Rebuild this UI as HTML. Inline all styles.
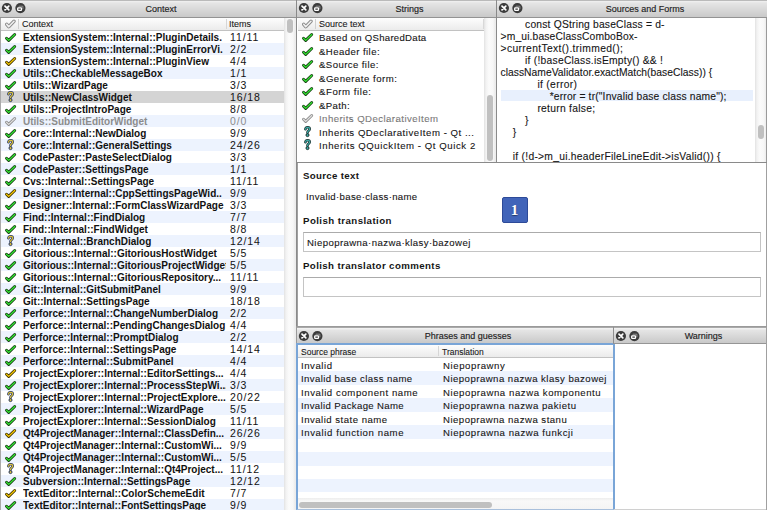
<!DOCTYPE html><html><head><meta charset="utf-8"><style>
*{margin:0;padding:0;box-sizing:border-box}
html,body{width:767px;height:510px;overflow:hidden;background:#ffffff;position:relative;font-family:"Liberation Sans",sans-serif;color:#000}
.a{position:absolute}
.tb{position:absolute;background:linear-gradient(#bababa 0,#bababa 1px,#f1f1f1 1px,#e5e5e5 3px,#c9c9c9 17px,#939393 17px,#939393 18px)}
.tb2{position:absolute;background:linear-gradient(#a9a9a9 0,#a9a9a9 1px,#f1f1f1 1px,#f1f1f1 2px,#e5e5e5 3px,#c9c9c9 16px)}
.tb2 svg{margin-top:0.5px}
.ttl{position:absolute;top:1px;height:17px;line-height:17px;text-align:center;font-size:9px;color:#222;-webkit-text-stroke:0.15px #222}
.tb2 .ttl{top:0.5px}
.ic{position:absolute}
.hdr{position:absolute;background:linear-gradient(#fdfdfd,#ebebeb);border-bottom:1px solid #c2c2c2;font-size:9px;color:#1a1a1a;-webkit-text-stroke:0.1px #1a1a1a}
.row{position:absolute;left:0;right:0;white-space:nowrap;overflow:hidden}
.alt{background:#edf3fe}
.sel{background:#d4d4d4}
.vtrack{position:absolute;background:linear-gradient(90deg,#e2e2e2 0,#f2f2f2 2px,#fbfbfb 5px,#f7f7f7 9px,#ececec 11px)}
.thumb{position:absolute;background:#c0c0c0;border-radius:3px}
.ctx{font-size:10px;font-weight:bold;color:#111}
.items{font-size:10.5px;letter-spacing:0.9px;color:#111}
.code{position:absolute;font-size:10.75px;white-space:pre;color:#151515;-webkit-text-stroke:0.1px #151515}
.lbl{position:absolute;font-size:10.5px;font-weight:bold;color:#151515}
.inp{position:absolute;border:1px solid #c4c4c4;border-top-color:#ababab;background:#fff}
.txt{color:#151515;-webkit-text-stroke:0.1px #151515}
</style></head><body>
<div class="a" style="left:0;top:0;width:1px;height:510px;background:#a9a9a9"></div>
<div class="tb" style="left:0px;top:0px;width:296px;height:18px"><svg class="ic" style="left:1px;top:2px" width="12" height="12" viewBox="0 0 12 12"><circle cx="5.9" cy="6" r="5.1" fill="#3b3b3b"/><path d="M4.0 4.1 L7.8 7.9 M7.8 4.1 L4.0 7.9" stroke="#fff" stroke-width="1.7" stroke-linecap="round"/></svg><svg class="ic" style="left:14px;top:2px" width="13" height="12" viewBox="0 0 13 12"><circle cx="6.4" cy="6.05" r="5.1" fill="#3b3b3b"/><path d="M4.9 4.6 V4.2 H8.9 V7.2" fill="none" stroke="#8f8f8f" stroke-width="1"/><rect x="3.7" y="5.8" width="3.8" height="2.6" rx="0.6" fill="none" stroke="#fff" stroke-width="1.3"/></svg><div class="ttl" style="left:26px;right:0">Context</div></div>
<div class="hdr" style="left:1px;top:18px;width:283px;height:13px"><svg class="ic" style="left:3.5px;top:-1.2px" width="14" height="12" viewBox="0 0 14 12"><path d="M1.7 7.3 L3.7 9.7 L9.0 4.3" fill="none" stroke="#8c8c8c" stroke-width="3.4" stroke-linecap="round" stroke-linejoin="round"/><path d="M1.7 7.3 L3.7 9.7 L9.0 4.3" fill="none" stroke="#f0f0f0" stroke-width="1.6" stroke-linecap="round" stroke-linejoin="round"/></svg><div class="a" style="left:17px;top:1px;width:1px;height:10px;background:#d0d0d0"></div><div class="a" style="left:21px;top:0.3px;line-height:12px">Context</div><div class="a" style="left:225px;top:1px;width:1px;height:10px;background:#d6d6d6"></div><div class="a" style="left:228px;top:0.3px;line-height:12px">Items</div></div>
<div class="a" style="left:1px;top:31px;width:283px;height:479px;overflow:hidden">
<div class="row" style="top:0px;height:12px"><svg class="ic" style="left:3px;top:0px" width="14" height="12" viewBox="0 0 14 12"><path d="M2.5 7.2 L4.7 9.4 L10.7 3.5" fill="none" stroke="#173d12" stroke-width="2.9" stroke-linecap="round" stroke-linejoin="round"/><path d="M2.5 7.2 L4.7 9.4 L10.7 3.5" fill="none" stroke="#33e533" stroke-width="1.3" stroke-linecap="round" stroke-linejoin="round"/></svg><div class="a ctx" style="left:22px;top:1px;width:203px;overflow:hidden;line-height:12px;">ExtensionSystem::Internal::PluginDetails.</div><div class="a items" style="left:229px;top:0;line-height:12px;">11/11</div></div>
<div class="row alt" style="top:12px;height:12px"><svg class="ic" style="left:3px;top:0px" width="14" height="12" viewBox="0 0 14 12"><path d="M2.5 7.2 L4.7 9.4 L10.7 3.5" fill="none" stroke="#173d12" stroke-width="2.9" stroke-linecap="round" stroke-linejoin="round"/><path d="M2.5 7.2 L4.7 9.4 L10.7 3.5" fill="none" stroke="#33e533" stroke-width="1.3" stroke-linecap="round" stroke-linejoin="round"/></svg><div class="a ctx" style="left:22px;top:1px;width:203px;overflow:hidden;line-height:12px;">ExtensionSystem::Internal::PluginErrorVi.</div><div class="a items" style="left:229px;top:0;line-height:12px;">2/2</div></div>
<div class="row" style="top:24px;height:12px"><svg class="ic" style="left:3px;top:0px" width="14" height="12" viewBox="0 0 14 12"><path d="M2.5 7.2 L4.7 9.4 L10.7 3.5" fill="none" stroke="#3d3000" stroke-width="2.9" stroke-linecap="round" stroke-linejoin="round"/><path d="M2.5 7.2 L4.7 9.4 L10.7 3.5" fill="none" stroke="#f5c800" stroke-width="1.3" stroke-linecap="round" stroke-linejoin="round"/></svg><div class="a ctx" style="left:22px;top:1px;width:203px;overflow:hidden;line-height:12px;">ExtensionSystem::Internal::PluginView</div><div class="a items" style="left:229px;top:0;line-height:12px;">4/4</div></div>
<div class="row alt" style="top:36px;height:12px"><svg class="ic" style="left:3px;top:0px" width="14" height="12" viewBox="0 0 14 12"><path d="M2.5 7.2 L4.7 9.4 L10.7 3.5" fill="none" stroke="#173d12" stroke-width="2.9" stroke-linecap="round" stroke-linejoin="round"/><path d="M2.5 7.2 L4.7 9.4 L10.7 3.5" fill="none" stroke="#33e533" stroke-width="1.3" stroke-linecap="round" stroke-linejoin="round"/></svg><div class="a ctx" style="left:22px;top:1px;width:203px;overflow:hidden;line-height:12px;">Utils::CheckableMessageBox</div><div class="a items" style="left:229px;top:0;line-height:12px;">1/1</div></div>
<div class="row" style="top:48px;height:12px"><svg class="ic" style="left:3px;top:0px" width="14" height="12" viewBox="0 0 14 12"><path d="M2.5 7.2 L4.7 9.4 L10.7 3.5" fill="none" stroke="#173d12" stroke-width="2.9" stroke-linecap="round" stroke-linejoin="round"/><path d="M2.5 7.2 L4.7 9.4 L10.7 3.5" fill="none" stroke="#33e533" stroke-width="1.3" stroke-linecap="round" stroke-linejoin="round"/></svg><div class="a ctx" style="left:22px;top:1px;width:203px;overflow:hidden;line-height:12px;">Utils::WizardPage</div><div class="a items" style="left:229px;top:0;line-height:12px;">3/3</div></div>
<div class="row sel" style="top:60px;height:12px"><svg class="ic" style="left:3px;top:0px" width="14" height="12" viewBox="0 0 14 12"><path d="M4.4 3.2 C4.6 1.9 5.5 1.3 6.6 1.3 C7.9 1.3 8.7 2.1 8.7 3.1 C8.7 4.3 7.6 4.8 6.9 5.4 C6.6 5.7 6.5 6.2 6.5 6.8" fill="none" stroke="#283860" stroke-width="2.6" stroke-linecap="round" stroke-linejoin="round"/><path d="M4.4 3.2 C4.6 1.9 5.5 1.3 6.6 1.3 C7.9 1.3 8.7 2.1 8.7 3.1 C8.7 4.3 7.6 4.8 6.9 5.4 C6.6 5.7 6.5 6.2 6.5 6.8" fill="none" stroke="#dcc23c" stroke-width="1.2" stroke-linecap="round" stroke-linejoin="round"/><circle cx="6.5" cy="9.1" r="1.5" fill="#dcc23c" stroke="#283860" stroke-width="1"/></svg><div class="a ctx" style="left:22px;top:1px;width:203px;overflow:hidden;line-height:12px;">Utils::NewClassWidget</div><div class="a items" style="left:229px;top:0;line-height:12px;">16/18</div></div>
<div class="row" style="top:72px;height:12px"><svg class="ic" style="left:3px;top:0px" width="14" height="12" viewBox="0 0 14 12"><path d="M2.5 7.2 L4.7 9.4 L10.7 3.5" fill="none" stroke="#173d12" stroke-width="2.9" stroke-linecap="round" stroke-linejoin="round"/><path d="M2.5 7.2 L4.7 9.4 L10.7 3.5" fill="none" stroke="#33e533" stroke-width="1.3" stroke-linecap="round" stroke-linejoin="round"/></svg><div class="a ctx" style="left:22px;top:1px;width:203px;overflow:hidden;line-height:12px;">Utils::ProjectIntroPage</div><div class="a items" style="left:229px;top:0;line-height:12px;">8/8</div></div>
<div class="row alt" style="top:84px;height:12px"><svg class="ic" style="left:3px;top:0px" width="14" height="12" viewBox="0 0 14 12"><path d="M2.5 7.2 L4.7 9.4 L10.7 3.5" fill="none" stroke="#8a8a8a" stroke-width="2.9" stroke-linecap="round" stroke-linejoin="round"/><path d="M2.5 7.2 L4.7 9.4 L10.7 3.5" fill="none" stroke="#dedede" stroke-width="1.3" stroke-linecap="round" stroke-linejoin="round"/></svg><div class="a ctx" style="left:22px;top:1px;width:203px;overflow:hidden;line-height:12px;color:#8c8c8c">Utils::SubmitEditorWidget</div><div class="a items" style="left:229px;top:0;line-height:12px;color:#8c8c8c">0/0</div></div>
<div class="row" style="top:96px;height:12px"><svg class="ic" style="left:3px;top:0px" width="14" height="12" viewBox="0 0 14 12"><path d="M2.5 7.2 L4.7 9.4 L10.7 3.5" fill="none" stroke="#173d12" stroke-width="2.9" stroke-linecap="round" stroke-linejoin="round"/><path d="M2.5 7.2 L4.7 9.4 L10.7 3.5" fill="none" stroke="#33e533" stroke-width="1.3" stroke-linecap="round" stroke-linejoin="round"/></svg><div class="a ctx" style="left:22px;top:1px;width:203px;overflow:hidden;line-height:12px;">Core::Internal::NewDialog</div><div class="a items" style="left:229px;top:0;line-height:12px;">9/9</div></div>
<div class="row alt" style="top:108px;height:12px"><svg class="ic" style="left:3px;top:0px" width="14" height="12" viewBox="0 0 14 12"><path d="M4.4 3.2 C4.6 1.9 5.5 1.3 6.6 1.3 C7.9 1.3 8.7 2.1 8.7 3.1 C8.7 4.3 7.6 4.8 6.9 5.4 C6.6 5.7 6.5 6.2 6.5 6.8" fill="none" stroke="#283860" stroke-width="2.6" stroke-linecap="round" stroke-linejoin="round"/><path d="M4.4 3.2 C4.6 1.9 5.5 1.3 6.6 1.3 C7.9 1.3 8.7 2.1 8.7 3.1 C8.7 4.3 7.6 4.8 6.9 5.4 C6.6 5.7 6.5 6.2 6.5 6.8" fill="none" stroke="#dcc23c" stroke-width="1.2" stroke-linecap="round" stroke-linejoin="round"/><circle cx="6.5" cy="9.1" r="1.5" fill="#dcc23c" stroke="#283860" stroke-width="1"/></svg><div class="a ctx" style="left:22px;top:1px;width:203px;overflow:hidden;line-height:12px;">Core::Internal::GeneralSettings</div><div class="a items" style="left:229px;top:0;line-height:12px;">24/26</div></div>
<div class="row" style="top:120px;height:12px"><svg class="ic" style="left:3px;top:0px" width="14" height="12" viewBox="0 0 14 12"><path d="M2.5 7.2 L4.7 9.4 L10.7 3.5" fill="none" stroke="#173d12" stroke-width="2.9" stroke-linecap="round" stroke-linejoin="round"/><path d="M2.5 7.2 L4.7 9.4 L10.7 3.5" fill="none" stroke="#33e533" stroke-width="1.3" stroke-linecap="round" stroke-linejoin="round"/></svg><div class="a ctx" style="left:22px;top:1px;width:203px;overflow:hidden;line-height:12px;">CodePaster::PasteSelectDialog</div><div class="a items" style="left:229px;top:0;line-height:12px;">3/3</div></div>
<div class="row alt" style="top:132px;height:12px"><svg class="ic" style="left:3px;top:0px" width="14" height="12" viewBox="0 0 14 12"><path d="M2.5 7.2 L4.7 9.4 L10.7 3.5" fill="none" stroke="#173d12" stroke-width="2.9" stroke-linecap="round" stroke-linejoin="round"/><path d="M2.5 7.2 L4.7 9.4 L10.7 3.5" fill="none" stroke="#33e533" stroke-width="1.3" stroke-linecap="round" stroke-linejoin="round"/></svg><div class="a ctx" style="left:22px;top:1px;width:203px;overflow:hidden;line-height:12px;">CodePaster::SettingsPage</div><div class="a items" style="left:229px;top:0;line-height:12px;">1/1</div></div>
<div class="row" style="top:144px;height:12px"><svg class="ic" style="left:3px;top:0px" width="14" height="12" viewBox="0 0 14 12"><path d="M2.5 7.2 L4.7 9.4 L10.7 3.5" fill="none" stroke="#173d12" stroke-width="2.9" stroke-linecap="round" stroke-linejoin="round"/><path d="M2.5 7.2 L4.7 9.4 L10.7 3.5" fill="none" stroke="#33e533" stroke-width="1.3" stroke-linecap="round" stroke-linejoin="round"/></svg><div class="a ctx" style="left:22px;top:1px;width:203px;overflow:hidden;line-height:12px;">Cvs::Internal::SettingsPage</div><div class="a items" style="left:229px;top:0;line-height:12px;">11/11</div></div>
<div class="row alt" style="top:156px;height:12px"><svg class="ic" style="left:3px;top:0px" width="14" height="12" viewBox="0 0 14 12"><path d="M2.5 7.2 L4.7 9.4 L10.7 3.5" fill="none" stroke="#3d3000" stroke-width="2.9" stroke-linecap="round" stroke-linejoin="round"/><path d="M2.5 7.2 L4.7 9.4 L10.7 3.5" fill="none" stroke="#f5c800" stroke-width="1.3" stroke-linecap="round" stroke-linejoin="round"/></svg><div class="a ctx" style="left:22px;top:1px;width:203px;overflow:hidden;line-height:12px;">Designer::Internal::CppSettingsPageWid..</div><div class="a items" style="left:229px;top:0;line-height:12px;">9/9</div></div>
<div class="row" style="top:168px;height:12px"><svg class="ic" style="left:3px;top:0px" width="14" height="12" viewBox="0 0 14 12"><path d="M2.5 7.2 L4.7 9.4 L10.7 3.5" fill="none" stroke="#173d12" stroke-width="2.9" stroke-linecap="round" stroke-linejoin="round"/><path d="M2.5 7.2 L4.7 9.4 L10.7 3.5" fill="none" stroke="#33e533" stroke-width="1.3" stroke-linecap="round" stroke-linejoin="round"/></svg><div class="a ctx" style="left:22px;top:1px;width:203px;overflow:hidden;line-height:12px;">Designer::Internal::FormClassWizardPage</div><div class="a items" style="left:229px;top:0;line-height:12px;">3/3</div></div>
<div class="row alt" style="top:180px;height:12px"><svg class="ic" style="left:3px;top:0px" width="14" height="12" viewBox="0 0 14 12"><path d="M2.5 7.2 L4.7 9.4 L10.7 3.5" fill="none" stroke="#173d12" stroke-width="2.9" stroke-linecap="round" stroke-linejoin="round"/><path d="M2.5 7.2 L4.7 9.4 L10.7 3.5" fill="none" stroke="#33e533" stroke-width="1.3" stroke-linecap="round" stroke-linejoin="round"/></svg><div class="a ctx" style="left:22px;top:1px;width:203px;overflow:hidden;line-height:12px;">Find::Internal::FindDialog</div><div class="a items" style="left:229px;top:0;line-height:12px;">7/7</div></div>
<div class="row" style="top:192px;height:12px"><svg class="ic" style="left:3px;top:0px" width="14" height="12" viewBox="0 0 14 12"><path d="M2.5 7.2 L4.7 9.4 L10.7 3.5" fill="none" stroke="#173d12" stroke-width="2.9" stroke-linecap="round" stroke-linejoin="round"/><path d="M2.5 7.2 L4.7 9.4 L10.7 3.5" fill="none" stroke="#33e533" stroke-width="1.3" stroke-linecap="round" stroke-linejoin="round"/></svg><div class="a ctx" style="left:22px;top:1px;width:203px;overflow:hidden;line-height:12px;">Find::Internal::FindWidget</div><div class="a items" style="left:229px;top:0;line-height:12px;">8/8</div></div>
<div class="row alt" style="top:204px;height:12px"><svg class="ic" style="left:3px;top:0px" width="14" height="12" viewBox="0 0 14 12"><path d="M4.4 3.2 C4.6 1.9 5.5 1.3 6.6 1.3 C7.9 1.3 8.7 2.1 8.7 3.1 C8.7 4.3 7.6 4.8 6.9 5.4 C6.6 5.7 6.5 6.2 6.5 6.8" fill="none" stroke="#283860" stroke-width="2.6" stroke-linecap="round" stroke-linejoin="round"/><path d="M4.4 3.2 C4.6 1.9 5.5 1.3 6.6 1.3 C7.9 1.3 8.7 2.1 8.7 3.1 C8.7 4.3 7.6 4.8 6.9 5.4 C6.6 5.7 6.5 6.2 6.5 6.8" fill="none" stroke="#dcc23c" stroke-width="1.2" stroke-linecap="round" stroke-linejoin="round"/><circle cx="6.5" cy="9.1" r="1.5" fill="#dcc23c" stroke="#283860" stroke-width="1"/></svg><div class="a ctx" style="left:22px;top:1px;width:203px;overflow:hidden;line-height:12px;">Git::Internal::BranchDialog</div><div class="a items" style="left:229px;top:0;line-height:12px;">12/14</div></div>
<div class="row" style="top:216px;height:12px"><svg class="ic" style="left:3px;top:0px" width="14" height="12" viewBox="0 0 14 12"><path d="M2.5 7.2 L4.7 9.4 L10.7 3.5" fill="none" stroke="#173d12" stroke-width="2.9" stroke-linecap="round" stroke-linejoin="round"/><path d="M2.5 7.2 L4.7 9.4 L10.7 3.5" fill="none" stroke="#33e533" stroke-width="1.3" stroke-linecap="round" stroke-linejoin="round"/></svg><div class="a ctx" style="left:22px;top:1px;width:203px;overflow:hidden;line-height:12px;">Gitorious::Internal::GitoriousHostWidget</div><div class="a items" style="left:229px;top:0;line-height:12px;">5/5</div></div>
<div class="row alt" style="top:228px;height:12px"><svg class="ic" style="left:3px;top:0px" width="14" height="12" viewBox="0 0 14 12"><path d="M2.5 7.2 L4.7 9.4 L10.7 3.5" fill="none" stroke="#173d12" stroke-width="2.9" stroke-linecap="round" stroke-linejoin="round"/><path d="M2.5 7.2 L4.7 9.4 L10.7 3.5" fill="none" stroke="#33e533" stroke-width="1.3" stroke-linecap="round" stroke-linejoin="round"/></svg><div class="a ctx" style="left:22px;top:1px;width:203px;overflow:hidden;line-height:12px;">Gitorious::Internal::GitoriousProjectWidget</div><div class="a items" style="left:229px;top:0;line-height:12px;">5/5</div></div>
<div class="row" style="top:240px;height:12px"><svg class="ic" style="left:3px;top:0px" width="14" height="12" viewBox="0 0 14 12"><path d="M2.5 7.2 L4.7 9.4 L10.7 3.5" fill="none" stroke="#173d12" stroke-width="2.9" stroke-linecap="round" stroke-linejoin="round"/><path d="M2.5 7.2 L4.7 9.4 L10.7 3.5" fill="none" stroke="#33e533" stroke-width="1.3" stroke-linecap="round" stroke-linejoin="round"/></svg><div class="a ctx" style="left:22px;top:1px;width:203px;overflow:hidden;line-height:12px;">Gitorious::Internal::GitoriousRepository...</div><div class="a items" style="left:229px;top:0;line-height:12px;">11/11</div></div>
<div class="row alt" style="top:252px;height:12px"><svg class="ic" style="left:3px;top:0px" width="14" height="12" viewBox="0 0 14 12"><path d="M2.5 7.2 L4.7 9.4 L10.7 3.5" fill="none" stroke="#173d12" stroke-width="2.9" stroke-linecap="round" stroke-linejoin="round"/><path d="M2.5 7.2 L4.7 9.4 L10.7 3.5" fill="none" stroke="#33e533" stroke-width="1.3" stroke-linecap="round" stroke-linejoin="round"/></svg><div class="a ctx" style="left:22px;top:1px;width:203px;overflow:hidden;line-height:12px;">Git::Internal::GitSubmitPanel</div><div class="a items" style="left:229px;top:0;line-height:12px;">9/9</div></div>
<div class="row" style="top:264px;height:12px"><svg class="ic" style="left:3px;top:0px" width="14" height="12" viewBox="0 0 14 12"><path d="M2.5 7.2 L4.7 9.4 L10.7 3.5" fill="none" stroke="#173d12" stroke-width="2.9" stroke-linecap="round" stroke-linejoin="round"/><path d="M2.5 7.2 L4.7 9.4 L10.7 3.5" fill="none" stroke="#33e533" stroke-width="1.3" stroke-linecap="round" stroke-linejoin="round"/></svg><div class="a ctx" style="left:22px;top:1px;width:203px;overflow:hidden;line-height:12px;">Git::Internal::SettingsPage</div><div class="a items" style="left:229px;top:0;line-height:12px;">18/18</div></div>
<div class="row alt" style="top:276px;height:12px"><svg class="ic" style="left:3px;top:0px" width="14" height="12" viewBox="0 0 14 12"><path d="M2.5 7.2 L4.7 9.4 L10.7 3.5" fill="none" stroke="#173d12" stroke-width="2.9" stroke-linecap="round" stroke-linejoin="round"/><path d="M2.5 7.2 L4.7 9.4 L10.7 3.5" fill="none" stroke="#33e533" stroke-width="1.3" stroke-linecap="round" stroke-linejoin="round"/></svg><div class="a ctx" style="left:22px;top:1px;width:203px;overflow:hidden;line-height:12px;">Perforce::Internal::ChangeNumberDialog</div><div class="a items" style="left:229px;top:0;line-height:12px;">2/2</div></div>
<div class="row" style="top:288px;height:12px"><svg class="ic" style="left:3px;top:0px" width="14" height="12" viewBox="0 0 14 12"><path d="M2.5 7.2 L4.7 9.4 L10.7 3.5" fill="none" stroke="#173d12" stroke-width="2.9" stroke-linecap="round" stroke-linejoin="round"/><path d="M2.5 7.2 L4.7 9.4 L10.7 3.5" fill="none" stroke="#33e533" stroke-width="1.3" stroke-linecap="round" stroke-linejoin="round"/></svg><div class="a ctx" style="left:22px;top:1px;width:203px;overflow:hidden;line-height:12px;">Perforce::Internal::PendingChangesDialog</div><div class="a items" style="left:229px;top:0;line-height:12px;">4/4</div></div>
<div class="row alt" style="top:300px;height:12px"><svg class="ic" style="left:3px;top:0px" width="14" height="12" viewBox="0 0 14 12"><path d="M2.5 7.2 L4.7 9.4 L10.7 3.5" fill="none" stroke="#173d12" stroke-width="2.9" stroke-linecap="round" stroke-linejoin="round"/><path d="M2.5 7.2 L4.7 9.4 L10.7 3.5" fill="none" stroke="#33e533" stroke-width="1.3" stroke-linecap="round" stroke-linejoin="round"/></svg><div class="a ctx" style="left:22px;top:1px;width:203px;overflow:hidden;line-height:12px;">Perforce::Internal::PromptDialog</div><div class="a items" style="left:229px;top:0;line-height:12px;">2/2</div></div>
<div class="row" style="top:312px;height:12px"><svg class="ic" style="left:3px;top:0px" width="14" height="12" viewBox="0 0 14 12"><path d="M2.5 7.2 L4.7 9.4 L10.7 3.5" fill="none" stroke="#173d12" stroke-width="2.9" stroke-linecap="round" stroke-linejoin="round"/><path d="M2.5 7.2 L4.7 9.4 L10.7 3.5" fill="none" stroke="#33e533" stroke-width="1.3" stroke-linecap="round" stroke-linejoin="round"/></svg><div class="a ctx" style="left:22px;top:1px;width:203px;overflow:hidden;line-height:12px;">Perforce::Internal::SettingsPage</div><div class="a items" style="left:229px;top:0;line-height:12px;">14/14</div></div>
<div class="row alt" style="top:324px;height:12px"><svg class="ic" style="left:3px;top:0px" width="14" height="12" viewBox="0 0 14 12"><path d="M2.5 7.2 L4.7 9.4 L10.7 3.5" fill="none" stroke="#173d12" stroke-width="2.9" stroke-linecap="round" stroke-linejoin="round"/><path d="M2.5 7.2 L4.7 9.4 L10.7 3.5" fill="none" stroke="#33e533" stroke-width="1.3" stroke-linecap="round" stroke-linejoin="round"/></svg><div class="a ctx" style="left:22px;top:1px;width:203px;overflow:hidden;line-height:12px;">Perforce::Internal::SubmitPanel</div><div class="a items" style="left:229px;top:0;line-height:12px;">4/4</div></div>
<div class="row" style="top:336px;height:12px"><svg class="ic" style="left:3px;top:0px" width="14" height="12" viewBox="0 0 14 12"><path d="M2.5 7.2 L4.7 9.4 L10.7 3.5" fill="none" stroke="#3d3000" stroke-width="2.9" stroke-linecap="round" stroke-linejoin="round"/><path d="M2.5 7.2 L4.7 9.4 L10.7 3.5" fill="none" stroke="#f5c800" stroke-width="1.3" stroke-linecap="round" stroke-linejoin="round"/></svg><div class="a ctx" style="left:22px;top:1px;width:203px;overflow:hidden;line-height:12px;">ProjectExplorer::Internal::EditorSettings...</div><div class="a items" style="left:229px;top:0;line-height:12px;">4/4</div></div>
<div class="row alt" style="top:348px;height:12px"><svg class="ic" style="left:3px;top:0px" width="14" height="12" viewBox="0 0 14 12"><path d="M2.5 7.2 L4.7 9.4 L10.7 3.5" fill="none" stroke="#173d12" stroke-width="2.9" stroke-linecap="round" stroke-linejoin="round"/><path d="M2.5 7.2 L4.7 9.4 L10.7 3.5" fill="none" stroke="#33e533" stroke-width="1.3" stroke-linecap="round" stroke-linejoin="round"/></svg><div class="a ctx" style="left:22px;top:1px;width:203px;overflow:hidden;line-height:12px;">ProjectExplorer::Internal::ProcessStepWi...</div><div class="a items" style="left:229px;top:0;line-height:12px;">3/3</div></div>
<div class="row" style="top:360px;height:12px"><svg class="ic" style="left:3px;top:0px" width="14" height="12" viewBox="0 0 14 12"><path d="M4.4 3.2 C4.6 1.9 5.5 1.3 6.6 1.3 C7.9 1.3 8.7 2.1 8.7 3.1 C8.7 4.3 7.6 4.8 6.9 5.4 C6.6 5.7 6.5 6.2 6.5 6.8" fill="none" stroke="#283860" stroke-width="2.6" stroke-linecap="round" stroke-linejoin="round"/><path d="M4.4 3.2 C4.6 1.9 5.5 1.3 6.6 1.3 C7.9 1.3 8.7 2.1 8.7 3.1 C8.7 4.3 7.6 4.8 6.9 5.4 C6.6 5.7 6.5 6.2 6.5 6.8" fill="none" stroke="#dcc23c" stroke-width="1.2" stroke-linecap="round" stroke-linejoin="round"/><circle cx="6.5" cy="9.1" r="1.5" fill="#dcc23c" stroke="#283860" stroke-width="1"/></svg><div class="a ctx" style="left:22px;top:1px;width:203px;overflow:hidden;line-height:12px;">ProjectExplorer::Internal::ProjectExplore...</div><div class="a items" style="left:229px;top:0;line-height:12px;">20/22</div></div>
<div class="row alt" style="top:372px;height:12px"><svg class="ic" style="left:3px;top:0px" width="14" height="12" viewBox="0 0 14 12"><path d="M2.5 7.2 L4.7 9.4 L10.7 3.5" fill="none" stroke="#173d12" stroke-width="2.9" stroke-linecap="round" stroke-linejoin="round"/><path d="M2.5 7.2 L4.7 9.4 L10.7 3.5" fill="none" stroke="#33e533" stroke-width="1.3" stroke-linecap="round" stroke-linejoin="round"/></svg><div class="a ctx" style="left:22px;top:1px;width:203px;overflow:hidden;line-height:12px;">ProjectExplorer::Internal::WizardPage</div><div class="a items" style="left:229px;top:0;line-height:12px;">5/5</div></div>
<div class="row" style="top:384px;height:12px"><svg class="ic" style="left:3px;top:0px" width="14" height="12" viewBox="0 0 14 12"><path d="M2.5 7.2 L4.7 9.4 L10.7 3.5" fill="none" stroke="#173d12" stroke-width="2.9" stroke-linecap="round" stroke-linejoin="round"/><path d="M2.5 7.2 L4.7 9.4 L10.7 3.5" fill="none" stroke="#33e533" stroke-width="1.3" stroke-linecap="round" stroke-linejoin="round"/></svg><div class="a ctx" style="left:22px;top:1px;width:203px;overflow:hidden;line-height:12px;">ProjectExplorer::Internal::SessionDialog</div><div class="a items" style="left:229px;top:0;line-height:12px;">11/11</div></div>
<div class="row alt" style="top:396px;height:12px"><svg class="ic" style="left:3px;top:0px" width="14" height="12" viewBox="0 0 14 12"><path d="M2.5 7.2 L4.7 9.4 L10.7 3.5" fill="none" stroke="#3d3000" stroke-width="2.9" stroke-linecap="round" stroke-linejoin="round"/><path d="M2.5 7.2 L4.7 9.4 L10.7 3.5" fill="none" stroke="#f5c800" stroke-width="1.3" stroke-linecap="round" stroke-linejoin="round"/></svg><div class="a ctx" style="left:22px;top:1px;width:203px;overflow:hidden;line-height:12px;">Qt4ProjectManager::Internal::ClassDefin...</div><div class="a items" style="left:229px;top:0;line-height:12px;">26/26</div></div>
<div class="row" style="top:408px;height:12px"><svg class="ic" style="left:3px;top:0px" width="14" height="12" viewBox="0 0 14 12"><path d="M2.5 7.2 L4.7 9.4 L10.7 3.5" fill="none" stroke="#173d12" stroke-width="2.9" stroke-linecap="round" stroke-linejoin="round"/><path d="M2.5 7.2 L4.7 9.4 L10.7 3.5" fill="none" stroke="#33e533" stroke-width="1.3" stroke-linecap="round" stroke-linejoin="round"/></svg><div class="a ctx" style="left:22px;top:1px;width:203px;overflow:hidden;line-height:12px;">Qt4ProjectManager::Internal::CustomWi...</div><div class="a items" style="left:229px;top:0;line-height:12px;">9/9</div></div>
<div class="row alt" style="top:420px;height:12px"><svg class="ic" style="left:3px;top:0px" width="14" height="12" viewBox="0 0 14 12"><path d="M2.5 7.2 L4.7 9.4 L10.7 3.5" fill="none" stroke="#173d12" stroke-width="2.9" stroke-linecap="round" stroke-linejoin="round"/><path d="M2.5 7.2 L4.7 9.4 L10.7 3.5" fill="none" stroke="#33e533" stroke-width="1.3" stroke-linecap="round" stroke-linejoin="round"/></svg><div class="a ctx" style="left:22px;top:1px;width:203px;overflow:hidden;line-height:12px;">Qt4ProjectManager::Internal::CustomWi...</div><div class="a items" style="left:229px;top:0;line-height:12px;">5/5</div></div>
<div class="row" style="top:432px;height:12px"><svg class="ic" style="left:3px;top:0px" width="14" height="12" viewBox="0 0 14 12"><path d="M4.4 3.2 C4.6 1.9 5.5 1.3 6.6 1.3 C7.9 1.3 8.7 2.1 8.7 3.1 C8.7 4.3 7.6 4.8 6.9 5.4 C6.6 5.7 6.5 6.2 6.5 6.8" fill="none" stroke="#283860" stroke-width="2.6" stroke-linecap="round" stroke-linejoin="round"/><path d="M4.4 3.2 C4.6 1.9 5.5 1.3 6.6 1.3 C7.9 1.3 8.7 2.1 8.7 3.1 C8.7 4.3 7.6 4.8 6.9 5.4 C6.6 5.7 6.5 6.2 6.5 6.8" fill="none" stroke="#dcc23c" stroke-width="1.2" stroke-linecap="round" stroke-linejoin="round"/><circle cx="6.5" cy="9.1" r="1.5" fill="#dcc23c" stroke="#283860" stroke-width="1"/></svg><div class="a ctx" style="left:22px;top:1px;width:203px;overflow:hidden;line-height:12px;">Qt4ProjectManager::Internal::Qt4Project...</div><div class="a items" style="left:229px;top:0;line-height:12px;">11/12</div></div>
<div class="row alt" style="top:444px;height:12px"><svg class="ic" style="left:3px;top:0px" width="14" height="12" viewBox="0 0 14 12"><path d="M2.5 7.2 L4.7 9.4 L10.7 3.5" fill="none" stroke="#173d12" stroke-width="2.9" stroke-linecap="round" stroke-linejoin="round"/><path d="M2.5 7.2 L4.7 9.4 L10.7 3.5" fill="none" stroke="#33e533" stroke-width="1.3" stroke-linecap="round" stroke-linejoin="round"/></svg><div class="a ctx" style="left:22px;top:1px;width:203px;overflow:hidden;line-height:12px;">Subversion::Internal::SettingsPage</div><div class="a items" style="left:229px;top:0;line-height:12px;">12/12</div></div>
<div class="row" style="top:456px;height:12px"><svg class="ic" style="left:3px;top:0px" width="14" height="12" viewBox="0 0 14 12"><path d="M2.5 7.2 L4.7 9.4 L10.7 3.5" fill="none" stroke="#3d3000" stroke-width="2.9" stroke-linecap="round" stroke-linejoin="round"/><path d="M2.5 7.2 L4.7 9.4 L10.7 3.5" fill="none" stroke="#f5c800" stroke-width="1.3" stroke-linecap="round" stroke-linejoin="round"/></svg><div class="a ctx" style="left:22px;top:1px;width:203px;overflow:hidden;line-height:12px;">TextEditor::Internal::ColorSchemeEdit</div><div class="a items" style="left:229px;top:0;line-height:12px;">7/7</div></div>
<div class="row alt" style="top:468px;height:12px"><svg class="ic" style="left:3px;top:0px" width="14" height="12" viewBox="0 0 14 12"><path d="M2.5 7.2 L4.7 9.4 L10.7 3.5" fill="none" stroke="#173d12" stroke-width="2.9" stroke-linecap="round" stroke-linejoin="round"/><path d="M2.5 7.2 L4.7 9.4 L10.7 3.5" fill="none" stroke="#33e533" stroke-width="1.3" stroke-linecap="round" stroke-linejoin="round"/></svg><div class="a ctx" style="left:22px;top:1px;width:203px;overflow:hidden;line-height:12px;">TextEditor::Internal::FontSettingsPage</div><div class="a items" style="left:229px;top:0;line-height:12px;">9/9</div></div>
</div>
<div class="vtrack" style="left:284px;top:18px;width:12px;height:492px"></div>
<div class="thumb" style="left:287px;top:19px;width:6px;height:14px"></div>
<div class="a" style="left:296px;top:0;width:1px;height:510px;background:#8a8a8a"></div>
<div class="tb" style="left:297px;top:0px;width:199px;height:18px"><svg class="ic" style="left:1px;top:2px" width="12" height="12" viewBox="0 0 12 12"><circle cx="5.9" cy="6" r="5.1" fill="#3b3b3b"/><path d="M4.0 4.1 L7.8 7.9 M7.8 4.1 L4.0 7.9" stroke="#fff" stroke-width="1.7" stroke-linecap="round"/></svg><svg class="ic" style="left:14px;top:2px" width="13" height="12" viewBox="0 0 13 12"><circle cx="6.4" cy="6.05" r="5.1" fill="#3b3b3b"/><path d="M4.9 4.6 V4.2 H8.9 V7.2" fill="none" stroke="#8f8f8f" stroke-width="1"/><rect x="3.7" y="5.8" width="3.8" height="2.6" rx="0.6" fill="none" stroke="#fff" stroke-width="1.3"/></svg><div class="ttl" style="left:26px;right:0">Strings</div></div>
<div class="a" style="left:297px;top:18px;width:199px;height:144px;background:#fff;overflow:hidden">
<div class="hdr" style="left:1px;top:0;width:186px;height:13px"><svg class="ic" style="left:3.5px;top:-1.2px" width="14" height="12" viewBox="0 0 14 12"><path d="M1.7 7.3 L3.7 9.7 L9.0 4.3" fill="none" stroke="#8a8a8a" stroke-width="3.4" stroke-linecap="round" stroke-linejoin="round"/><path d="M1.7 7.3 L3.7 9.7 L9.0 4.3" fill="none" stroke="#f0f0f0" stroke-width="1.6" stroke-linecap="round" stroke-linejoin="round"/></svg><div class="a" style="left:17px;top:1px;width:1px;height:10px;background:#d0d0d0"></div><div class="a" style="left:21px;top:0.3px;line-height:12px">Source text</div><div class="a" style="left:185px;top:1px;width:1px;height:10px;background:#d8d8d8"></div></div>
<div class="row" style="top:13.00px;height:13.5px"><svg class="ic" style="left:4px;top:0px" width="14" height="12" viewBox="0 0 14 12"><path d="M2.5 7.2 L4.7 9.4 L10.7 3.5" fill="none" stroke="#173d12" stroke-width="2.9" stroke-linecap="round" stroke-linejoin="round"/><path d="M2.5 7.2 L4.7 9.4 L10.7 3.5" fill="none" stroke="#33e533" stroke-width="1.3" stroke-linecap="round" stroke-linejoin="round"/></svg><div class="a txt" style="left:22px;top:0;line-height:13px;;font-size:9.6px;font-weight:normal;letter-spacing:0.280px;">Based on QSharedData</div></div>
<div class="row" style="top:26.50px;height:13.5px"><svg class="ic" style="left:4px;top:0px" width="14" height="12" viewBox="0 0 14 12"><path d="M2.5 7.2 L4.7 9.4 L10.7 3.5" fill="none" stroke="#173d12" stroke-width="2.9" stroke-linecap="round" stroke-linejoin="round"/><path d="M2.5 7.2 L4.7 9.4 L10.7 3.5" fill="none" stroke="#33e533" stroke-width="1.3" stroke-linecap="round" stroke-linejoin="round"/></svg><div class="a txt" style="left:22px;top:0;line-height:13px;;font-size:9.6px;font-weight:normal;letter-spacing:0.428px;">&amp;Header file:</div></div>
<div class="row" style="top:40.00px;height:13.5px"><svg class="ic" style="left:4px;top:0px" width="14" height="12" viewBox="0 0 14 12"><path d="M2.5 7.2 L4.7 9.4 L10.7 3.5" fill="none" stroke="#173d12" stroke-width="2.9" stroke-linecap="round" stroke-linejoin="round"/><path d="M2.5 7.2 L4.7 9.4 L10.7 3.5" fill="none" stroke="#33e533" stroke-width="1.3" stroke-linecap="round" stroke-linejoin="round"/></svg><div class="a txt" style="left:22px;top:0;line-height:13px;;font-size:9.6px;font-weight:normal;letter-spacing:0.416px;">&amp;Source file:</div></div>
<div class="row" style="top:53.50px;height:13.5px"><svg class="ic" style="left:4px;top:0px" width="14" height="12" viewBox="0 0 14 12"><path d="M2.5 7.2 L4.7 9.4 L10.7 3.5" fill="none" stroke="#173d12" stroke-width="2.9" stroke-linecap="round" stroke-linejoin="round"/><path d="M2.5 7.2 L4.7 9.4 L10.7 3.5" fill="none" stroke="#33e533" stroke-width="1.3" stroke-linecap="round" stroke-linejoin="round"/></svg><div class="a txt" style="left:22px;top:0;line-height:13px;;font-size:9.6px;font-weight:normal;letter-spacing:0.491px;">&amp;Generate form:</div></div>
<div class="row" style="top:67.00px;height:13.5px"><svg class="ic" style="left:4px;top:0px" width="14" height="12" viewBox="0 0 14 12"><path d="M2.5 7.2 L4.7 9.4 L10.7 3.5" fill="none" stroke="#173d12" stroke-width="2.9" stroke-linecap="round" stroke-linejoin="round"/><path d="M2.5 7.2 L4.7 9.4 L10.7 3.5" fill="none" stroke="#33e533" stroke-width="1.3" stroke-linecap="round" stroke-linejoin="round"/></svg><div class="a txt" style="left:22px;top:0;line-height:13px;;font-size:9.6px;font-weight:normal;letter-spacing:0.561px;">&amp;Form file:</div></div>
<div class="row" style="top:80.50px;height:13.5px"><svg class="ic" style="left:4px;top:0px" width="14" height="12" viewBox="0 0 14 12"><path d="M2.5 7.2 L4.7 9.4 L10.7 3.5" fill="none" stroke="#173d12" stroke-width="2.9" stroke-linecap="round" stroke-linejoin="round"/><path d="M2.5 7.2 L4.7 9.4 L10.7 3.5" fill="none" stroke="#33e533" stroke-width="1.3" stroke-linecap="round" stroke-linejoin="round"/></svg><div class="a txt" style="left:22px;top:0;line-height:13px;;font-size:9.6px;font-weight:normal;letter-spacing:0.358px;">&amp;Path:</div></div>
<div class="row" style="top:94.00px;height:13.5px"><svg class="ic" style="left:4px;top:0px" width="14" height="12" viewBox="0 0 14 12"><path d="M2.5 7.2 L4.7 9.4 L10.7 3.5" fill="none" stroke="#8a8a8a" stroke-width="2.9" stroke-linecap="round" stroke-linejoin="round"/><path d="M2.5 7.2 L4.7 9.4 L10.7 3.5" fill="none" stroke="#dedede" stroke-width="1.3" stroke-linecap="round" stroke-linejoin="round"/></svg><div class="a txt" style="left:22px;top:0;line-height:13px;color:#8c8c8c;font-size:9.6px;font-weight:normal;letter-spacing:0.449px;">Inherits QDeclarativeItem</div></div>
<div class="row" style="top:107.50px;height:13.5px"><svg class="ic" style="left:4px;top:0px" width="14" height="12" viewBox="0 0 14 12"><path d="M4.4 3.2 C4.6 1.9 5.5 1.3 6.6 1.3 C7.9 1.3 8.7 2.1 8.7 3.1 C8.7 4.3 7.6 4.8 6.9 5.4 C6.6 5.7 6.5 6.2 6.5 6.8" fill="none" stroke="#17302f" stroke-width="2.6" stroke-linecap="round" stroke-linejoin="round"/><path d="M4.4 3.2 C4.6 1.9 5.5 1.3 6.6 1.3 C7.9 1.3 8.7 2.1 8.7 3.1 C8.7 4.3 7.6 4.8 6.9 5.4 C6.6 5.7 6.5 6.2 6.5 6.8" fill="none" stroke="#3aa6a2" stroke-width="1.2" stroke-linecap="round" stroke-linejoin="round"/><circle cx="6.5" cy="9.1" r="1.5" fill="#3aa6a2" stroke="#17302f" stroke-width="1"/></svg><div class="a txt" style="left:22px;top:0;line-height:13px;;font-size:9.6px;font-weight:normal;letter-spacing:0.528px;">Inherits QDeclarativeItem - Qt ...</div></div>
<div class="row" style="top:121.00px;height:13.5px"><svg class="ic" style="left:4px;top:0px" width="14" height="12" viewBox="0 0 14 12"><path d="M4.4 3.2 C4.6 1.9 5.5 1.3 6.6 1.3 C7.9 1.3 8.7 2.1 8.7 3.1 C8.7 4.3 7.6 4.8 6.9 5.4 C6.6 5.7 6.5 6.2 6.5 6.8" fill="none" stroke="#17302f" stroke-width="2.6" stroke-linecap="round" stroke-linejoin="round"/><path d="M4.4 3.2 C4.6 1.9 5.5 1.3 6.6 1.3 C7.9 1.3 8.7 2.1 8.7 3.1 C8.7 4.3 7.6 4.8 6.9 5.4 C6.6 5.7 6.5 6.2 6.5 6.8" fill="none" stroke="#3aa6a2" stroke-width="1.2" stroke-linecap="round" stroke-linejoin="round"/><circle cx="6.5" cy="9.1" r="1.5" fill="#3aa6a2" stroke="#17302f" stroke-width="1"/></svg><div class="a txt" style="left:22px;top:0;line-height:13px;;font-size:9.6px;font-weight:normal;letter-spacing:0.570px;">Inherits QQuickItem - Qt Quick 2</div></div>
<div class="vtrack" style="left:187px;top:0;width:12px;height:144px"></div>
<div class="thumb" style="left:190px;top:76.5px;width:6px;height:66.5px;border-radius:3px"></div>
</div>
<div class="a" style="left:496px;top:0;width:1px;height:163px;background:#8a8a8a"></div>
<div class="tb" style="left:497px;top:0px;width:270px;height:18px"><svg class="ic" style="left:1px;top:2px" width="12" height="12" viewBox="0 0 12 12"><circle cx="5.9" cy="6" r="5.1" fill="#3b3b3b"/><path d="M4.0 4.1 L7.8 7.9 M7.8 4.1 L4.0 7.9" stroke="#fff" stroke-width="1.7" stroke-linecap="round"/></svg><svg class="ic" style="left:14px;top:2px" width="13" height="12" viewBox="0 0 13 12"><circle cx="6.4" cy="6.05" r="5.1" fill="#3b3b3b"/><path d="M4.9 4.6 V4.2 H8.9 V7.2" fill="none" stroke="#8f8f8f" stroke-width="1"/><rect x="3.7" y="5.8" width="3.8" height="2.6" rx="0.6" fill="none" stroke="#fff" stroke-width="1.3"/></svg><div class="ttl" style="left:26px;right:0">Sources and Forms</div></div>
<div class="a" style="left:497px;top:18px;width:270px;height:144px;background:#fff;overflow:hidden">
<div class="a" style="left:4px;top:72px;width:252px;height:11px;background:#e8f0fd"></div>
<div class="code" style="left:28.1px;top:0.7px;line-height:12px;font-size:10.3px;font-weight:normal;letter-spacing:0.192px;">const QString baseClass = d-</div>
<div class="code" style="left:3.5px;top:12.7px;line-height:12px;font-size:10.3px;font-weight:normal;letter-spacing:0.146px;">&gt;m_ui.baseClassComboBox-</div>
<div class="code" style="left:3.5px;top:24.7px;line-height:12px;font-size:10.3px;font-weight:normal;letter-spacing:0.363px;">&gt;currentText().trimmed();</div>
<div class="code" style="left:28.1px;top:36.7px;line-height:12px;font-size:10.3px;font-weight:normal;letter-spacing:0.242px;">if (!baseClass.isEmpty() &amp;&amp; !</div>
<div class="code" style="left:3.5px;top:48.7px;line-height:12px;font-size:10.3px;font-weight:normal;letter-spacing:0.030px;">classNameValidator.exactMatch(baseClass)) {</div>
<div class="code" style="left:40.4px;top:60.7px;line-height:12px;font-size:10.3px;font-weight:normal;letter-spacing:0.321px;">if (error)</div>
<div class="code" style="left:52.7px;top:72.7px;line-height:12px;font-size:10.3px;font-weight:normal;letter-spacing:0.160px;">*error = tr("Invalid base class name");</div>
<div class="code" style="left:40.4px;top:84.7px;line-height:12px;font-size:10.3px;font-weight:normal;letter-spacing:0.269px;">return false;</div>
<div class="code" style="left:28.1px;top:96.7px;line-height:12px;font-size:10.3px;font-weight:normal;letter-spacing:0.000px;">}</div>
<div class="code" style="left:15.8px;top:108.7px;line-height:12px;font-size:10.3px;font-weight:normal;letter-spacing:0.000px;">}</div>
<div class="code" style="left:3.5px;top:120.7px;line-height:12px;font-size:10.3px;font-weight:normal;letter-spacing:0.000px;"></div>
<div class="code" style="left:15.8px;top:132.7px;line-height:12px;font-size:10.3px;font-weight:normal;letter-spacing:0.261px;">if (!d-&gt;m_ui.headerFileLineEdit-&gt;isValid()) {</div>
<div class="vtrack" style="left:258px;top:0;width:11px;height:144px"></div>
<div class="thumb" style="left:261px;top:107px;width:6px;height:14px"></div>
<div class="a" style="left:269px;top:0;width:1px;height:144px;background:#9a9a9a"></div>
</div>
<div class="a" style="left:296px;top:162px;width:471px;height:1px;background:#8a8a8a"></div>
<div class="a" style="left:297px;top:163px;width:470px;height:164px;background:#fff">
<div class="a" style="left:0;top:0;width:1px;height:164px;background:#a0a0a0"></div>
<div class="a" style="right:0;top:0;width:1px;height:164px;background:#a0a0a0"></div>
<div class="lbl" style="left:6px;top:6.8px;line-height:12px;font-size:9.7px;font-weight:bold;letter-spacing:0.313px;">Source text</div>
<div class="a txt" style="left:9px;top:28.2px;line-height:12px;font-size:9.6px;font-weight:normal;letter-spacing:0.328px;">Invalid·base·class·name</div>
<div class="lbl" style="left:6px;top:51.5px;line-height:12px;font-size:9.7px;font-weight:bold;letter-spacing:0.419px;">Polish translation</div>
<div class="inp" style="left:6px;top:69px;width:458px;height:20px"><div class="a txt" style="left:3px;top:3.6px;line-height:12px;font-size:9.6px;font-weight:normal;letter-spacing:0.413px;">Niepoprawna·nazwa·klasy·bazowej</div></div>
<div class="lbl" style="left:6px;top:96.5px;line-height:12px;font-size:9.7px;font-weight:bold;letter-spacing:0.388px;">Polish translator comments</div>
<div class="inp" style="left:6px;top:114px;width:458px;height:20px"></div>
<div class="a" style="left:205px;top:34px;width:26px;height:26px;background:#4164b9;border:1px solid #2d4a98;border-radius:2px;color:#fff;font-family:'Liberation Serif',serif;font-weight:bold;font-size:15px;line-height:25px;text-align:center;text-indent:-1px;text-shadow:0 1px 1px rgba(0,0,0,.45)">1</div>
<div class="a" style="left:0;top:163px;width:470px;height:1px;background:#9a9a9a"></div>
</div>
<div class="a" style="left:296px;top:326px;width:1px;height:18px;background:#9a9a9a"></div>
<div class="tb2" style="left:297px;top:327px;width:316px;height:16px"><svg class="ic" style="left:1px;top:2px" width="12" height="12" viewBox="0 0 12 12"><circle cx="5.9" cy="6" r="5.1" fill="#3b3b3b"/><path d="M4.0 4.1 L7.8 7.9 M7.8 4.1 L4.0 7.9" stroke="#fff" stroke-width="1.7" stroke-linecap="round"/></svg><svg class="ic" style="left:14px;top:2px" width="13" height="12" viewBox="0 0 13 12"><circle cx="6.4" cy="6.05" r="5.1" fill="#3b3b3b"/><path d="M4.9 4.6 V4.2 H8.9 V7.2" fill="none" stroke="#8f8f8f" stroke-width="1"/><rect x="3.7" y="5.8" width="3.8" height="2.6" rx="0.6" fill="none" stroke="#fff" stroke-width="1.3"/></svg><div class="ttl" style="left:26px;right:0">Phrases and guesses</div></div>
<div class="a" style="left:296px;top:343px;width:319px;height:167px;background:#fff;border:2px solid #79a5d7;border-bottom:1px solid #a9c0dc;overflow:hidden">
<div class="hdr" style="left:0;top:0;width:315px;height:13px;font-size:8.5px"><div class="a" style="left:3px;top:1px;line-height:12px">Source phrase</div><div class="a" style="left:140px;top:1px;width:1px;height:10px;background:#d6d6d6"></div><div class="a" style="left:144px;top:1px;line-height:12px">Translation</div></div>
<div class="row" style="top:13.00px;height:13.45px"><div class="a txt" style="left:3px;top:1px;line-height:13px;font-size:9.6px;font-weight:normal;letter-spacing:0.544px;">Invalid</div><div class="a txt" style="left:145px;top:1px;line-height:13px;font-size:9.6px;font-weight:normal;letter-spacing:0.580px;">Niepoprawny</div></div>
<div class="row alt" style="top:26.45px;height:13.45px"><div class="a txt" style="left:3px;top:1px;line-height:13px;font-size:9.6px;font-weight:normal;letter-spacing:0.400px;">Invalid base class name</div><div class="a txt" style="left:145px;top:1px;line-height:13px;font-size:9.6px;font-weight:normal;letter-spacing:0.472px;">Niepoprawna nazwa klasy bazowej</div></div>
<div class="row" style="top:39.90px;height:13.45px"><div class="a txt" style="left:3px;top:1px;line-height:13px;font-size:9.6px;font-weight:normal;letter-spacing:0.579px;">Invalid component name</div><div class="a txt" style="left:145px;top:1px;line-height:13px;font-size:9.6px;font-weight:normal;letter-spacing:0.566px;">Niepoprawna nazwa komponentu</div></div>
<div class="row alt" style="top:53.35px;height:13.45px"><div class="a txt" style="left:3px;top:1px;line-height:13px;font-size:9.6px;font-weight:normal;letter-spacing:0.353px;">Invalid Package Name</div><div class="a txt" style="left:145px;top:1px;line-height:13px;font-size:9.6px;font-weight:normal;letter-spacing:0.520px;">Niepoprawna nazwa pakietu</div></div>
<div class="row" style="top:66.80px;height:13.45px"><div class="a txt" style="left:3px;top:1px;line-height:13px;font-size:9.6px;font-weight:normal;letter-spacing:0.490px;">Invalid state name</div><div class="a txt" style="left:145px;top:1px;line-height:13px;font-size:9.6px;font-weight:normal;letter-spacing:0.487px;">Niepoprawna nazwa stanu</div></div>
<div class="row alt" style="top:80.25px;height:13.45px"><div class="a txt" style="left:3px;top:1px;line-height:13px;font-size:9.6px;font-weight:normal;letter-spacing:0.591px;">Invalid function name</div><div class="a txt" style="left:145px;top:1px;line-height:13px;font-size:9.6px;font-weight:normal;letter-spacing:0.542px;">Niepoprawna nazwa funkcji</div></div>
<div class="row" style="top:93.70px;height:13.45px"></div>
<div class="row alt" style="top:107.15px;height:13.45px"></div>
<div class="row" style="top:120.60px;height:13.45px"></div>
<div class="row alt" style="top:134.05px;height:13.45px"></div>
<div class="row" style="top:147.50px;height:13.45px"></div>
<div class="a" style="left:0;top:153px;width:315px;height:11px;background:linear-gradient(#eeeeee,#f8f8f8 3px,#f4f4f4)"></div>
<div class="thumb" style="left:1px;top:156.5px;width:193px;height:6px"></div>
</div>
<div class="a" style="left:613px;top:327px;width:1px;height:17px;background:#8f8f8f"></div>
<div class="tb2" style="left:614px;top:327px;width:153px;height:16px"><svg class="ic" style="left:1px;top:2px" width="12" height="12" viewBox="0 0 12 12"><circle cx="5.9" cy="6" r="5.1" fill="#3b3b3b"/><path d="M4.0 4.1 L7.8 7.9 M7.8 4.1 L4.0 7.9" stroke="#fff" stroke-width="1.7" stroke-linecap="round"/></svg><svg class="ic" style="left:14px;top:2px" width="13" height="12" viewBox="0 0 13 12"><circle cx="6.4" cy="6.05" r="5.1" fill="#3b3b3b"/><path d="M4.9 4.6 V4.2 H8.9 V7.2" fill="none" stroke="#8f8f8f" stroke-width="1"/><rect x="3.7" y="5.8" width="3.8" height="2.6" rx="0.6" fill="none" stroke="#fff" stroke-width="1.3"/></svg><div class="ttl" style="left:26px;right:0">Warnings</div></div>
<div class="a" style="left:614px;top:343px;width:153px;height:1px;background:#959595"></div>
<div class="a" style="left:766px;top:327px;width:1px;height:183px;background:#a0a0a0"></div>
<div class="a" style="left:614px;top:509px;width:152px;height:1px;background:#d0d0d0"></div>
</body></html>
